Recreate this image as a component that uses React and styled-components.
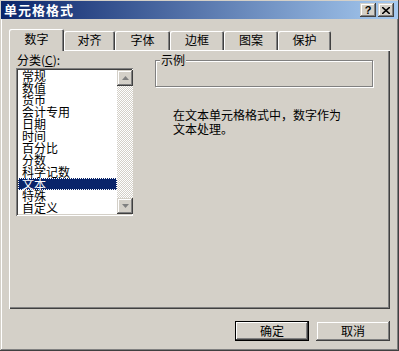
import React from "react";
import styled, { createGlobalStyle } from "styled-components";

const GlobalStyle = createGlobalStyle`
  html, body {
    margin: 0;
    padding: 0;
    background: #d4d0c8;
  }
  body {
    font-family: "Noto Sans CJK SC", "Liberation Sans", sans-serif;
    font-size: 12px;
    color: #000;
  }
`;

const raised = `
  box-shadow: inset -1px -1px #404040, inset 1px 1px #d4d0c8,
    inset -2px -2px #808080, inset 2px 2px #fff;
`;

const Window = styled.div`
  width: 399px;
  height: 351px;
  box-sizing: border-box;
  padding: 1px 1px 3px 1px;
  background: #d4d0c8;
  ${raised}
  display: flex;
  flex-direction: column;
`;

const TitleBar = styled.div`
  height: 18px;
  display: flex;
  align-items: center;
  padding: 0 4px 0 3px;
  background: linear-gradient(to right, #0a246a, #a6caf0);
`;

const Title = styled.div`
  flex: 1;
  color: #fff;
  font-weight: bold;
  font-size: 13px;
  letter-spacing: 1px;
  line-height: 18px;
`;

const CaptionButton = styled.div`
  width: 16px;
  height: 14px;
  margin-left: ${(p) => (p.$gap ? "2px" : "0")};
  background: #d4d0c8;
  ${raised}
  display: flex;
  align-items: center;
  justify-content: center;
  font-family: "Liberation Sans", sans-serif;
  font-weight: bold;
  font-size: 11px;
  line-height: 14px;
`;

const TabRow = styled.div`
  display: flex;
  align-items: flex-end;
  height: 21px;
  margin-top: 10px;
  padding-left: 8px;
  position: relative;
  z-index: 1;
`;

const Tab = styled.div`
  width: ${(p) => p.$w}px;
  height: ${(p) => (p.$active ? 22 : 19)}px;
  margin-bottom: ${(p) => (p.$active ? -1 : 0)}px;
  box-sizing: border-box;
  background: #d4d0c8;
  border-top-left-radius: 2px;
  border-top-right-radius: 2px;
  box-shadow: inset 1px 1px #fff, inset -1px 0 #404040, inset -2px 0 #808080;
  display: flex;
  justify-content: center;
  padding-top: ${(p) => (p.$active ? 4 : 3)}px;
  line-height: 12px;
`;

const Panel = styled.div`
  height: 259px;
  margin: 0 8px;
  box-sizing: border-box;
  box-shadow: inset 1px 1px #fff, inset -1px -1px #404040,
    inset -2px -2px #808080;
  display: flex;
  padding: 4px 0 0 7px;
`;

const LeftColumn = styled.div`
  width: 117px;
  display: flex;
  flex-direction: column;
`;

const Label = styled.div`
  padding-left: 1px;
  line-height: 12px;
  height: 14px;
  u {
    text-decoration: underline;
  }
`;

const ListBox = styled.div`
  height: 148px;
  box-sizing: border-box;
  padding: 2px 0 2px 2px;
  background: #fff;
  box-shadow: inset 1px 1px #808080, inset -1px -1px #fff,
    inset 2px 2px #404040, inset -2px -2px #d4d0c8;
  display: flex;
`;

const Items = styled.div`
  flex: 1;
`;

const Item = styled.div`
  height: 12px;
  line-height: 12px;
  padding-left: 4px;
  white-space: nowrap;
  background: ${(p) => (p.$selected ? "#0a246a" : "transparent")};
  color: ${(p) => (p.$selected ? "#fff" : "#000")};
  outline: ${(p) => (p.$selected ? "1px dotted #fff" : "none")};
  outline-offset: -1px;
`;

const ScrollBar = styled.div`
  width: 16px;
  display: flex;
  flex-direction: column;
  justify-content: space-between;
  background: repeating-conic-gradient(#fff 0 25%, #d4d0c8 0 50%) 0 0 / 2px 2px;
`;

const ScrollButton = styled.div`
  width: 16px;
  height: 16px;
  background: #d4d0c8;
  ${raised}
  display: flex;
  align-items: center;
  justify-content: center;
`;

const RightColumn = styled.div`
  margin-left: 22px;
  width: 218px;
  padding-top: 6px;
`;

const GroupBox = styled.div`
  position: relative;
  height: 25px;
  border: 1px solid #808080;
  box-shadow: 1px 1px 0 #fff, inset 1px 1px 0 #fff;
`;

const GroupLegend = styled.span`
  position: absolute;
  top: -7px;
  left: 4px;
  padding: 0 1px;
  background: #d4d0c8;
  line-height: 12px;
`;

const Description = styled.div`
  margin: 21px 0 0 18px;
  line-height: 14px;
`;

const ButtonRow = styled.div`
  display: flex;
  justify-content: flex-end;
  gap: 7px;
  margin: 12px 8px 0 0;
`;

const Button = styled.div`
  width: 74px;
  height: 20px;
  box-sizing: border-box;
  display: flex;
  align-items: center;
  justify-content: center;
  line-height: 12px;
  ${(p) =>
    p.$default
      ? `box-shadow: inset 0 0 0 1px #000, inset -2px -2px #404040, inset 2px 2px #fff, inset -3px -3px #808080;`
      : raised}
`;

const Arrow = ({ down }) => (
  <svg width="7" height="4" viewBox="0 0 7 4">
    <path d={down ? "M0 0h7L3.5 4z" : "M0 4h7L3.5 0z"} fill="#808080" />
  </svg>
);

const categories = [
  "常规",
  "数值",
  "货币",
  "会计专用",
  "日期",
  "时间",
  "百分比",
  "分数",
  "科学记数",
  "文本",
  "特殊",
  "自定义",
];

const tabs = [
  { label: "数字", w: 55 },
  { label: "对齐", w: 51 },
  { label: "字体", w: 55 },
  { label: "边框", w: 54 },
  { label: "图案", w: 54 },
  { label: "保护", w: 53 },
];

export default function App() {
  return (
    <>
      <GlobalStyle />
      <Window>
        <TitleBar>
          <Title>单元格格式</Title>
          <CaptionButton>?</CaptionButton>
          <CaptionButton $gap>
            <svg width="8" height="7" viewBox="0 0 8 7">
              <path d="M0 0l8 7M8 0L0 7" stroke="#000" strokeWidth="1.6" />
            </svg>
          </CaptionButton>
        </TitleBar>

        <TabRow>
          {tabs.map((t, i) => (
            <Tab key={t.label} $w={t.w} $active={i === 0}>
              {t.label}
            </Tab>
          ))}
        </TabRow>

        <Panel>
          <LeftColumn>
            <Label>
              分类(<u>C</u>):
            </Label>
            <ListBox>
              <Items>
                {categories.map((c) => (
                  <Item key={c} $selected={c === "文本"}>
                    {c}
                  </Item>
                ))}
              </Items>
              <ScrollBar>
                <ScrollButton>
                  <Arrow />
                </ScrollButton>
                <ScrollButton>
                  <Arrow down />
                </ScrollButton>
              </ScrollBar>
            </ListBox>
          </LeftColumn>

          <RightColumn>
            <GroupBox>
              <GroupLegend>示例</GroupLegend>
            </GroupBox>
            <Description>
              在文本单元格格式中，数字作为
              <br />
              文本处理。
            </Description>
          </RightColumn>
        </Panel>

        <ButtonRow>
          <Button $default>确定</Button>
          <Button>取消</Button>
        </ButtonRow>
      </Window>
    </>
  );
}
